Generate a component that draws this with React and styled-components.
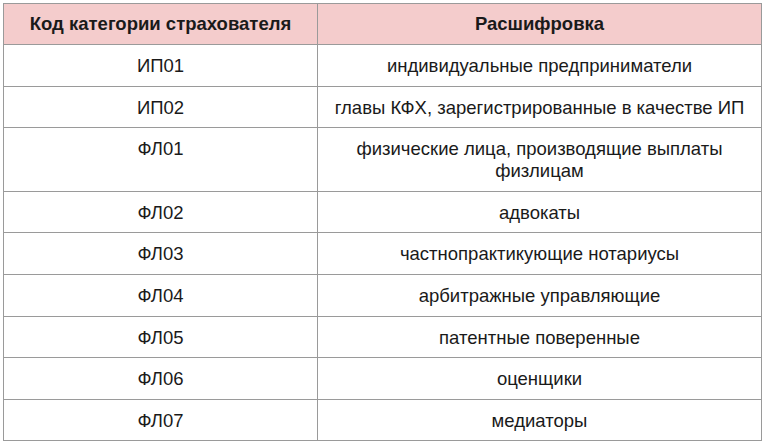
import React from "react";
import styled, { createGlobalStyle } from "styled-components";

const GlobalStyle = createGlobalStyle`
  body {
    margin: 0;
    background: #ffffff;
    font-family: "Liberation Sans", Arial, sans-serif;
  }
`;

const Page = styled.div`
  padding: 3px 0 0 3px;
`;

const Table = styled.table`
  border-collapse: collapse;
  width: 758px;
  table-layout: fixed;
  color: #1a1a1a;
  font-size: 18.5px;
  line-height: 22px;
`;

const HeadCell = styled.th`
  background: #f4cccc;
  border: 1px solid #9a9a9a;
  font-weight: bold;
  padding: 9px 8px 9px;
  text-align: center;
`;

const Cell = styled.td`
  border: 1px solid #9a9a9a;
  padding: 10px 8px 8.6px;
  text-align: center;
  vertical-align: top;
`;

const rows = [
  ["ИП01", "индивидуальные предприниматели"],
  ["ИП02", "главы КФХ, зарегистрированные в качестве ИП"],
  ["ФЛ01", "физические лица, производящие выплаты физлицам"],
  ["ФЛ02", "адвокаты"],
  ["ФЛ03", "частнопрактикующие нотариусы"],
  ["ФЛ04", "арбитражные управляющие"],
  ["ФЛ05", "патентные поверенные"],
  ["ФЛ06", "оценщики"],
  ["ФЛ07", "медиаторы"],
];

const App = () => {
  return (
    <Page>
      <GlobalStyle />
      <Table>
        <colgroup>
          <col style={{ width: 314 }} />
          <col style={{ width: 444 }} />
        </colgroup>
        <thead>
          <tr>
            <HeadCell>Код категории страхователя</HeadCell>
            <HeadCell>Расшифровка</HeadCell>
          </tr>
        </thead>
        <tbody>
          {rows.map(([code, text]) => (
            <tr key={code}>
              <Cell>{code}</Cell>
              <Cell>{text}</Cell>
            </tr>
          ))}
        </tbody>
      </Table>
    </Page>
  );
};

export default App;
